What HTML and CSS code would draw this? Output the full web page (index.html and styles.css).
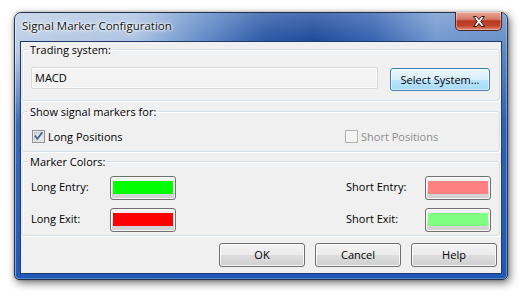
FILE: index.html
```
<!DOCTYPE html>
<html>
<head>
<meta charset="utf-8">
<link rel="stylesheet" href="styles.css">
</head>
<body>
<div class="window">
  <div class="titlebar">
    <span class="title">Signal Marker Configuration</span>
    <div class="close">
      <svg width="14" height="11" viewBox="0 0 14 11"><polygon points="1.5,0.5 4.5,0.5 7,3.5 9.5,0.5 12.5,0.5 8.8,5.5 12.5,10.5 9.5,10.5 7,7.5 4.5,10.5 1.5,10.5 5.2,5.5" fill="#fff" stroke="#3a1712" stroke-width="1" stroke-linejoin="round"/></svg>
    </div>
  </div>
  <div class="client">
    <fieldset class="group g1">
      <legend>Trading system:</legend>
      <div class="sysrow">
        <div class="edit">MACD</div>
        <div class="btn btn-hot">Select System...</div>
      </div>
    </fieldset>
    <fieldset class="group g2">
      <legend>Show signal markers for:</legend>
      <div class="checks">
        <div class="check">
          <svg class="box" width="13" height="13" viewBox="0 0 13 13">
            <defs><linearGradient id="cb" x1="0" y1="0" x2="1" y2="1"><stop offset="0" stop-color="#cbcfd5"/><stop offset="1" stop-color="#f6f6f6"/></linearGradient></defs>
            <rect x="0.5" y="0.5" width="12" height="12" fill="#fff" stroke="#8f8f8f"/>
            <rect x="2" y="2" width="9" height="9" fill="url(#cb)" stroke="#aeb3b9" stroke-width="0.6"/>
            <path d="M3.3 6.2 L5.4 8.8 L9.8 2.9" fill="none" stroke="#4a5f97" stroke-width="1.7" stroke-linecap="square"/>
          </svg>
          <span>Long Positions</span>
        </div>
        <div class="check disabled">
          <svg class="box" width="13" height="13" viewBox="0 0 13 13">
            <rect x="0.5" y="0.5" width="12" height="12" fill="#f4f4f4" stroke="#b1b1b1"/>
          </svg>
          <span>Short Positions</span>
        </div>
      </div>
    </fieldset>
    <fieldset class="group g3">
      <legend>Marker Colors:</legend>
      <div class="colors">
        <span class="lbl">Long Entry:</span>
        <div class="swatch"><div class="fill c-lime"></div></div>
        <span class="spacer"></span>
        <span class="lbl">Short Entry:</span>
        <div class="swatch"><div class="fill c-pink"></div></div>
        <span class="lbl">Long Exit:</span>
        <div class="swatch"><div class="fill c-red"></div></div>
        <span class="spacer"></span>
        <span class="lbl">Short Exit:</span>
        <div class="swatch"><div class="fill c-mint"></div></div>
      </div>
    </fieldset>
    <div class="actions">
      <div class="btn">OK</div>
      <div class="btn">Cancel</div>
      <div class="btn">Help</div>
    </div>
  </div>
</div>
</body>
</html>
```
FILE: styles.css
```
* { box-sizing: border-box; }
html, body { margin: 0; padding: 0; background: #ffffff; }
body {
  width: 524px; height: 296px; overflow: hidden;
  font-family: "Open Sans", "Noto Sans", sans-serif;
  font-size: 11px;
  color: #000;
}
.window {
  margin: 12px 0 0 14px;
  width: 494px;
  height: 268px;
  border: 1px solid #24324c;
  border-radius: 7px 7px 5px 5px;
  padding: 0 5px 5px 5px;
  display: flex;
  flex-direction: column;
  background:
    linear-gradient(to bottom, rgba(255,255,255,0.25) 0px, rgba(255,255,255,0) 40px),
    linear-gradient(to bottom, rgba(36,92,184,0) 40px, rgba(36,92,184,0.85) 110px, rgba(30,88,184,1) 268px),
    linear-gradient(to right, #b9cbe4 0px, #a6bfe0 120px, #5581c4 190px, #1a4b9e 250px, #0e3d93 300px, #2858ac 360px, #6790cb 420px, #5a86c4 494px);
  box-shadow: 2px 3px 9px rgba(0,0,0,0.55), 0 0 3px rgba(0,0,0,0.25), inset 1px 0 0 rgba(255,255,255,0.45), inset -1px 0 0 rgba(255,255,255,0.3), inset 0 -1px 0 rgba(255,255,255,0.25);
}
.titlebar {
  height: 28px;
  display: flex;
  justify-content: space-between;
  align-items: flex-start;
  padding-left: 2px;
}
.title {
  margin-top: 5px;
  font-size: 11.5px;
  color: #111;
  text-shadow: 0 0 6px #fff, 0 0 3px #fff, 0 0 2px #fff;
}
.close {
  width: 47px;
  height: 19px;
  margin-top: -1px;
  border: 1px solid #4b2620;
  border-top: none;
  border-radius: 0 0 5px 5px;
  background: linear-gradient(to bottom, #e9a99a 0%, #d77a68 40%, #b9371f 50%, #c2432c 75%, #e08a72 100%);
  box-shadow: inset 0 0 0 1px rgba(255,255,255,0.35);
  display: flex;
  align-items: center;
  justify-content: center;
}
.close svg { display: block; margin-top: 1px; }
.client {
  flex: 1;
  border: 1px solid #1f3a66;
  background: #f0f0f0;
  padding: 0 1px;
  display: flex;
  flex-direction: column;
}
.group {
  margin: 0;
  border: 1px solid #d5dfe5;
  border-radius: 3px;
  box-shadow: inset 1px 1px 0 #fff, 1px 1px 0 #fff;
  padding: 0 8px 0 8px;
  min-width: 0;
}
.group legend {
  padding: 0 2px;
  margin-left: -3px;
  line-height: 15px;
  height: 15px;
}
.g1 { padding-top: 10px; padding-bottom: 9px; }
.g2 { margin-top: 3px; padding-top: 10px; padding-bottom: 7px; }
.g3 { margin-top: 2px; padding-top: 7px; padding-bottom: 3px; }
.sysrow {
  display: flex;
  align-items: flex-start;
  gap: 12px;
}
.edit {
  width: 347px;
  height: 22px;
  border: 1px solid #d9d9d9;
  border-radius: 2px;
  background: #f3f3f3;
  box-shadow: inset 0 0 0 1px #fbfbfb;
  padding: 0 3px;
  line-height: 20px;
}
.btn {
  width: 86px;
  height: 24px;
  border: 1px solid #707070;
  border-radius: 3px;
  background: linear-gradient(to bottom, #f2f2f2 0%, #ebebeb 50%, #dddddd 50%, #cfcfcf 100%);
  box-shadow: inset 0 0 0 1px rgba(255,255,255,0.8);
  display: flex;
  align-items: center;
  justify-content: center;
  padding-bottom: 1px;
}
.btn-hot {
  width: 100px;
  height: 23px;
  margin-top: 1px;
  border-color: #3c7fb1;
  background: linear-gradient(to bottom, #eaf6fd 0%, #d9f0fc 50%, #bee6fd 50%, #a7d9f5 100%);
  box-shadow: inset 0 0 0 1px rgba(255,255,255,0.6);
}
.checks {
  display: grid;
  grid-template-columns: 313px auto;
  align-items: center;
}
.check {
  display: flex;
  align-items: center;
  gap: 3px;
  margin-left: 1px;
  line-height: 15px;
}
.check .box { display: block; flex: none; }
.check.disabled { color: #8d8d8d; }
.colors {
  display: grid;
  grid-template-columns: 79px 66px 1fr 79px 66px;
  row-gap: 8px;
  align-items: center;
}
.lbl { padding-bottom: 3px; }
.swatch {
  width: 66px;
  height: 24px;
  border: 1px solid #707070;
  border-radius: 3px;
  background: linear-gradient(to bottom, #f2f2f2 0%, #ebebeb 50%, #dddddd 50%, #cfcfcf 100%);
  box-shadow: inset 0 0 0 1px rgba(255,255,255,0.8);
  padding: 4px 2px 5px 2px;
}
.fill { height: 13px; }
.c-lime { background: #00ff00; }
.c-red { background: #ff0000; }
.c-pink { background: #ff8080; }
.c-mint { background: #80ff80; }
.actions {
  margin-top: 7px;
  display: flex;
  justify-content: flex-end;
  gap: 10px;
  padding-right: 3px;
}
```
